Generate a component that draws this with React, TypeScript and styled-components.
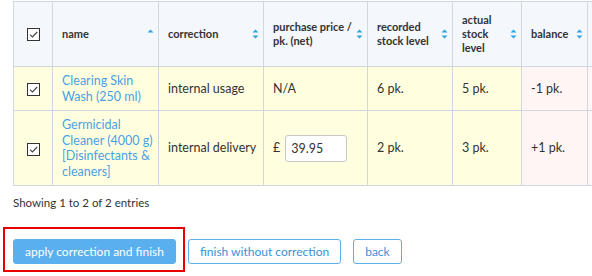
import React from "react";
import styled, { createGlobalStyle } from "styled-components";

const GlobalStyle = createGlobalStyle`
  html, body {
    margin: 0;
    padding: 0;
    background: #ffffff;
    font-family: Lato, "Open Sans", "Liberation Sans", Arial, sans-serif;
    color: #333333;
  }
`;

const Page = styled.div`
  width: 592px;
  height: 276px;
  overflow: hidden;
  padding-top: 1px;
  box-sizing: border-box;
`;

const TableWrap = styled.div`
  margin-left: 13px;
  width: 579px;
  overflow: hidden;
`;

const Table = styled.table`
  border-collapse: collapse;
  table-layout: fixed;
  width: 634px;
  font-size: 12.5px;
`;

const Th = styled.th<{ $w: number }>`
  width: ${(p) => p.$w}px;
  box-sizing: border-box;
  background: #f4f7fb;
  border: 1px solid #cfd8e1;
  padding: 11px 4px 11px 9px;
  font-size: 11px;
  font-weight: 700;
  line-height: 14px;
  text-align: left;
  vertical-align: middle;
  color: #333;
`;

const HeadInner = styled.div`
  display: flex;
  align-items: center;
`;

const HeadLabel = styled.span`
  flex: 1;
  padding-right: 2px;
`;

const Td = styled.td<{ $tone?: "yellow" | "pink" }>`
  box-sizing: border-box;
  background: ${(p) => (p.$tone === "pink" ? "#fff5f5" : "#ffffe0")};
  border: 1px solid #cfd8e1;
  padding: 6px 3px 6px 9px;
  line-height: 15.5px;
  vertical-align: middle;
  color: #333;
`;

const CheckCell = styled(Td)`
  padding: 6px 0;
  text-align: center;
`;

const CheckHead = styled(Th)`
  padding: 11px 0;
  text-align: center;
`;

const Box = styled.span`
  display: inline-block;
  width: 13px;
  height: 13px;
  box-sizing: border-box;
  border: 1px solid #333;
  background: #fff;
  vertical-align: middle;
  svg {
    display: block;
  }
`;

const Link = styled.a`
  color: #4a9fe0;
  text-decoration: none;
`;

const PriceField = styled.div`
  display: flex;
  align-items: center;
  gap: 5px;
`;

const Input = styled.input`
  width: 62px;
  height: 27px;
  box-sizing: border-box;
  border: 1px solid #c8c8c8;
  border-radius: 3px;
  padding: 0 5px;
  font-family: inherit;
  font-size: 12.5px;
  color: #333;
  background: #fff;
`;

const Info = styled.div`
  margin: 9px 0 0 13px;
  font-size: 11.5px;
  line-height: 15px;
  color: #333;
`;

const ButtonRow = styled.div`
  display: flex;
  gap: 12px;
  margin: 29px 0 0 13px;
`;

const Highlight = styled.div`
  position: relative;
  &::after {
    content: "";
    position: absolute;
    top: -12px;
    left: -10px;
    right: -9px;
    bottom: -8px;
    border: 2px solid #e60000;
    pointer-events: none;
  }
`;

const Button = styled.button<{ $primary?: boolean }>`
  height: 25px;
  box-sizing: border-box;
  padding: 0 11px;
  border-radius: 3px;
  border: 1px solid #5aafee;
  background: ${(p) => (p.$primary ? "#5aafee" : "#ffffff")};
  color: ${(p) => (p.$primary ? "#ffffff" : "#3b8fd6")};
  font-family: inherit;
  font-size: 12px;
  line-height: 23px;
  cursor: pointer;
`;

const Check = () => (
  <Box>
    <svg width="11" height="11" viewBox="0 0 11 11">
      <path d="M2 5.6 L4.4 8 L9.2 3" fill="none" stroke="#444" strokeWidth="1.1" />
    </svg>
  </Box>
);

const SortIcon = ({ dir }: { dir?: "asc" }) => (
  <svg width="7" height="12" viewBox="0 0 7 12" style={{ flexShrink: 0 }}>
    <path d="M0.5 4.5 L3.5 1.5 L6.5 4.5 Z" fill="#2ba3e4" />
    {dir !== "asc" && <path d="M0.5 7.5 L3.5 10.5 L6.5 7.5 Z" fill="#2ba3e4" />}
  </svg>
);

const columns: { label: string; w: number; dir?: "asc" }[] = [
  { label: "name", w: 106, dir: "asc" },
  { label: "correction", w: 105 },
  { label: "purchase price / pk. (net)", w: 104 },
  { label: "recorded stock level", w: 85 },
  { label: "actual stock level", w: 69 },
  { label: "balance", w: 66 },
  { label: "", w: 60 },
];

export default function App() {
  return (
    <Page>
      <GlobalStyle />
      <TableWrap>
        <Table>
          <thead>
            <tr>
              <CheckHead $w={39}>
                <Check />
              </CheckHead>
              {columns.map((c, i) => (
                <Th key={i} $w={c.w}>
                  {c.label && (
                    <HeadInner>
                      <HeadLabel>{c.label}</HeadLabel>
                      <SortIcon dir={c.dir} />
                    </HeadInner>
                  )}
                </Th>
              ))}
            </tr>
          </thead>
          <tbody>
            <tr>
              <CheckCell>
                <Check />
              </CheckCell>
              <Td>
                <Link href="#">Clearing Skin Wash (250 ml)</Link>
              </Td>
              <Td>internal usage</Td>
              <Td>N/A</Td>
              <Td>6 pk.</Td>
              <Td>5 pk.</Td>
              <Td $tone="pink">-1 pk.</Td>
              <Td $tone="pink" />
            </tr>
            <tr>
              <CheckCell>
                <Check />
              </CheckCell>
              <Td>
                <Link href="#">Germicidal Cleaner (4000 g) [Disinfectants &amp; cleaners]</Link>
              </Td>
              <Td>internal delivery</Td>
              <Td>
                <PriceField>
                  <span>£</span>
                  <Input defaultValue="39.95" />
                </PriceField>
              </Td>
              <Td>2 pk.</Td>
              <Td>3 pk.</Td>
              <Td $tone="pink">+1 pk.</Td>
              <Td $tone="pink" />
            </tr>
          </tbody>
        </Table>
      </TableWrap>
      <Info>Showing 1 to 2 of 2 entries</Info>
      <ButtonRow>
        <Highlight>
          <Button $primary>apply correction and finish</Button>
        </Highlight>
        <Button>finish without correction</Button>
        <Button>back</Button>
      </ButtonRow>
    </Page>
  );
}
